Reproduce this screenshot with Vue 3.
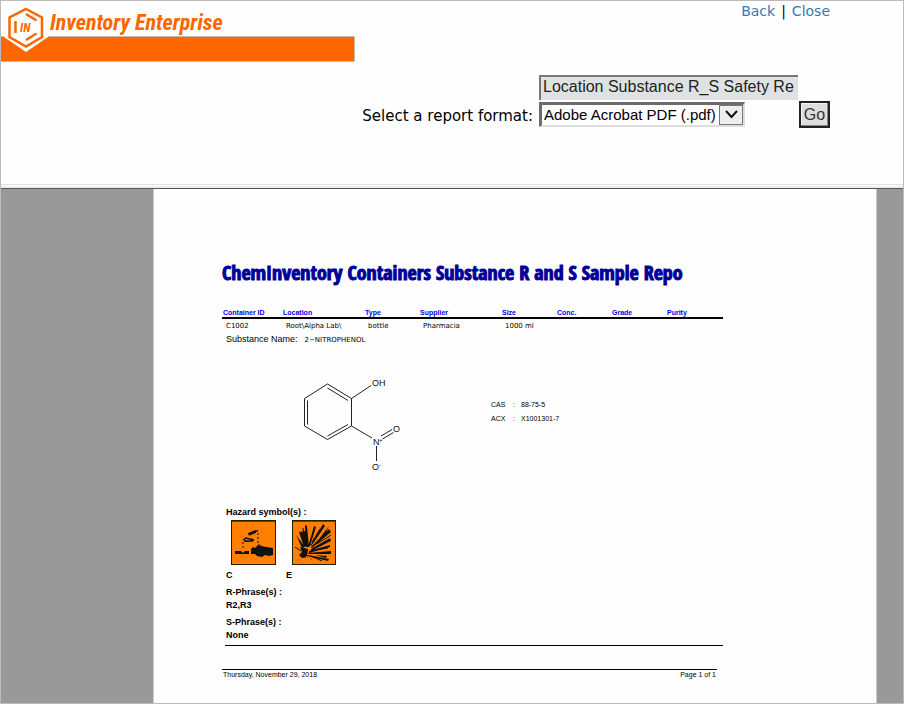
<script setup>
import { ref } from 'vue'

const title = ref('Location Substance R_S Safety Re')
const format = ref('pdf')

const columns = ['Container ID', 'Location', 'Type', 'Supplier', 'Size', 'Conc.', 'Grade', 'Purity']
const containers = [
  ['C1002', 'Root\\Alpha Lab\\', 'bottle', 'Pharmacia', '1000 ml', '', '', ''],
]
const phrases = [
  { label: 'R-Phrase(s) :', value: 'R2,R3' },
  { label: 'S-Phrase(s) :', value: 'None' },
]
</script>

<template>
  <div class="frame">
    <header class="top">
      <svg class="brand" width="360" height="64" viewBox="0 0 360 64" role="img" aria-label="Inventory Enterprise">
        <rect x="0" y="36" width="353" height="24" fill="#ff6600" />
        <path d="M46 35.500H353.500V60.500H0M0 35.500H6" fill="none" stroke="#c9b8ae" />
        <path d="M25 2L47 14V36L25 51L3 36V14Z" fill="#fefefe" />
        <path d="M25 8L41 16.500V36L25 45.500L8.500 36V16.500Z" fill="#fefefe" stroke="#ff6600" stroke-width="2.500" />
        <path d="M14.500 20V32M25 13L35.500 19.500M25 39L35.500 32.500" fill="none" stroke="#ff6600" stroke-width="2.500" />
        <text class="badge-text" x="19" y="31">IN</text>
        <text class="brand-text" x="49" y="29">Inventory Enterprise</text>
      </svg>

      <div class="controls">
        <nav class="links">
          <a href="#back">Back</a><span>|</span><a href="#close">Close</a>
        </nav>
        <form class="report-form" @submit.prevent>
          <input v-model="title" class="title-box" type="text" aria-label="Report title" readonly />
          <label class="format-label" for="format">Select a report format:</label>
          <div class="select-wrap">
            <select id="format" v-model="format">
              <option value="pdf">Adobe Acrobat PDF (.pdf)</option>
            </select>
            <svg class="arrow" width="24" height="20" viewBox="0 0 24 20" aria-hidden="true">
              <rect x="0.500" y="0.500" width="23" height="19" fill="#eeeeee" stroke="#777777" />
              <path d="M7 6L12.500 12L18 6" fill="none" stroke="#111111" stroke-width="2" />
            </svg>
          </div>
          <button class="go" type="submit">Go</button>
        </form>
      </div>
    </header>

    <main class="viewer">
      <article class="page">
        <h1>ChemInventory Containers Substance R and S Sample Repo</h1>

        <table>
          <colgroup>
            <col class="c-wide" /><col class="c-large" /><col class="c-mid" /><col class="c-large" />
            <col class="c-mid" /><col class="c-mid" /><col class="c-mid" /><col />
          </colgroup>
          <thead>
            <tr><th v-for="name in columns" :key="name" scope="col">{{ name }}</th></tr>
          </thead>
          <tbody>
            <tr v-for="row in containers" :key="row[0]">
              <td v-for="(cell, i) in row" :key="i">{{ cell }}</td>
            </tr>
          </tbody>
        </table>

        <section class="details">
          <p class="substance">Substance Name:<span>2−NITROPHENOL</span></p>

          <div class="chemistry">
            <svg class="molecule" width="120" height="110" viewBox="290 370 120 110" role="img" aria-label="Structure of 2-nitrophenol">
              <g fill="none" stroke="#222222" stroke-width="1">
                <path d="M327.500 384L351.500 398.500V426L327.500 439.500L304.500 426V398.500Z" />
                <path d="M327.500 388L348 400.500M348 424.500L327.500 436M307.500 424.500V400.500" />
                <path d="M351.500 398.500L371 385.500M351.500 426L372 438" />
                <path d="M381 436L392 429.500M382.500 439L393.500 432.500M376.500 446V461" />
              </g>
              <g class="atoms">
                <text x="372" y="386">OH</text>
                <text x="373" y="445">N</text>
                <text class="charge" x="379" y="442">+</text>
                <text x="393" y="432">O</text>
                <text x="372" y="470">O</text>
                <text class="charge" x="379" y="467">-</text>
              </g>
            </svg>
            <dl class="ids">
              <dt>CAS</dt><dd>:</dd><dd>88-75-5</dd>
              <dt>ACX</dt><dd>:</dd><dd>X1001301-7</dd>
            </dl>
          </div>

          <h2>Hazard symbol(s) :</h2>
          <div class="hazards">
            <figure>
              <svg width="46" height="46" viewBox="0 0 46 46" role="img" aria-label="Corrosive">
                <rect x="0.500" y="0.500" width="44" height="44" fill="#ff7f00" stroke="#222200" />
                <path d="M1 1.500H44" stroke="#7a3c00" stroke-width="1" />
                <path d="M4 31H10L12 33L14 31H18V34H4Z" fill="#111111" />
                <path d="M20 29L22 27L24 28L27 25L31 26L35 27L42 28V35L38 36L34 35L31 37L26 36L24 34L20 34Z" fill="#111111" />
                <path d="M17 14L24 11L27 11M18 15L25 12M12 20L15 18L23 20M13 21H22" fill="none" stroke="#111111" stroke-width="1.500" />
                <path d="M12 22V30M15 20V22M27 13V19M27 21V23M28 24V28" fill="none" stroke="#111111" stroke-dasharray="2 2" />
              </svg>
              <figcaption>C</figcaption>
            </figure>
            <figure>
              <svg width="46" height="46" viewBox="0 0 46 46" role="img" aria-label="Explosive">
                <rect x="1.500" y="0.500" width="43" height="44" fill="#ff7f00" stroke="#222200" />
                <path d="M2 1.500H44" stroke="#7a3c00" stroke-width="1" />
                <path d="M9 27L17 29L16 37L11 38L8 35L11 32Z" fill="#111111" />
                <path d="M12 30L5 15L13 26ZM13 27L8 12L15 11L16 26ZM15 27L14 5L16 6L18 27ZM17 27L23 6L25 7L19 26ZM19 26L32 4L34 6L21 25ZM20 27L38 9L40 12L21 28ZM20 29L39 18L40 21L20 31ZM18 31L39 25V27L18 33ZM17 33L40 31V34L18 34ZM17 35L38 39L37 41L16 36ZM24 35L36 36L35 38ZM25 23L38 6L35 12Z" fill="#111111" />
                <path d="M10 31L4 27M12 26L9 21M21 22L29 9M25 30L37 28M20 36L31 41M14 25L12 8M26 24L40 15" stroke="#111111" stroke-width="1" />
                <path d="M15 36L17 38M19 37L21 40M6 40H8" stroke="#c44f00" />
              </svg>
              <figcaption>E</figcaption>
            </figure>
          </div>

          <div v-for="item in phrases" :key="item.label" class="phrase">
            <h2>{{ item.label }}</h2>
            <p>{{ item.value }}</p>
          </div>
        </section>

        <footer>
          <span>Thursday, November 29, 2018</span>
          <span>Page 1 of 1</span>
        </footer>
      </article>
    </main>
  </div>
</template>

<style>
body {
  margin: 0;
  background: #fefefe;
}
</style>

<style scoped>
* {
  box-sizing: border-box;
}

.frame {
  display: flex;
  flex-direction: column;
  min-height: 100vh;
  border: 1px solid #bbbbbb;
  background: #fefefe;
  font-family: "Liberation Sans", Arial, sans-serif;
  color: #000000;
}

.top {
  display: flex;
  justify-content: space-between;
  min-height: 188px;
  border-bottom: 1px solid #555555;
  background: linear-gradient(#e2e2e2, #e2e2e2) 0 183px / 100% 1px no-repeat,
    linear-gradient(#eeeeee, #eeeeee) 0 185px / 100% 2px no-repeat;
}

.brand {
  flex: none;
}

.brand-text {
  font: italic bold 22px "Roboto Condensed", "Liberation Sans", sans-serif;
  fill: #ff6600;
}

.badge-text {
  font: italic bold 12px "Roboto Condensed", "Liberation Sans", sans-serif;
  fill: #ff6600;
}

.controls {
  display: flex;
  flex-direction: column;
  align-items: flex-end;
  margin-left: -40px;
  padding-right: 73px;
}

.links {
  display: flex;
  gap: 6px;
  height: 20px;
  margin-bottom: 54px;
  font: 14px/20px "DejaVu Sans", Verdana, sans-serif;
}

.links a {
  color: #337ab7;
  text-decoration: none;
}

.report-form {
  display: grid;
  grid-template-columns: auto 260px 31px;
  grid-template-rows: 25px 27px;
  row-gap: 1px;
}

.title-box {
  grid-column: 2;
  width: 259px;
  height: 25px;
  padding: 0 2px 3px;
  border: 0 solid #777777;
  border-width: 2px 0 0 2px;
  border-radius: 0;
  background: #dfe2e2;
  color: #222222;
  font: 16px "Liberation Sans", Arial, sans-serif;
  outline: none;
}

.format-label {
  grid-column: 1;
  padding-right: 6px;
  font: 15px/30px "DejaVu Sans", Verdana, sans-serif;
  white-space: nowrap;
}

.select-wrap {
  position: relative;
  justify-self: start;
  width: 206px;
  height: 25px;
  margin-top: 1px;
}

.select-wrap select {
  width: 100%;
  height: 100%;
  padding: 0 24px 2px 2px;
  border: 2px solid #dddddd;
  border-top: 3px solid #6c6c6c;
  border-left: 3px solid #6c6c6c;
  border-radius: 0;
  appearance: none;
  background: #fefefe;
  color: #000000;
  font: 15px "Liberation Sans", Arial, sans-serif;
}

.arrow {
  position: absolute;
  top: 3px;
  right: 2px;
  pointer-events: none;
}

.go {
  padding: 0;
  border: 2px solid #222222;
  border-radius: 0;
  background: #dddddd;
  box-shadow: inset -1px -1px #888888, inset 1px 1px #f4f4f4;
  color: #333333;
  font: 16px "Liberation Sans", Arial, sans-serif;
}

.viewer {
  flex: 1;
  display: flex;
  padding: 0 26px 0 152px;
  background: #999999;
}

.page {
  flex: 1;
  min-width: 0;
  padding: 70px 153px 20px 68px;
  border: 0 solid #cccccc;
  border-width: 0 1px;
  background: #fefefe;
}

h1 {
  height: 48px;
  margin: 0;
  color: #000099;
  font: bold 20px/28px "Open Sans Condensed", "Liberation Sans", sans-serif;
  -webkit-text-stroke: 1px #000099;
  white-space: nowrap;
}

table {
  width: 100%;
  table-layout: fixed;
  border-collapse: collapse;
}

.c-wide {
  width: 60px;
}

.c-large {
  width: 82px;
}

.c-mid {
  width: 55px;
}

th {
  height: 11px;
  padding: 0 1px;
  border-bottom: 2px solid #000000;
  color: #0000ee;
  font: bold 7px/9px "Liberation Sans", sans-serif;
  text-align: left;
  white-space: nowrap;
}

td {
  height: 14px;
  padding: 0 4px;
  font: 7px/14px "DejaVu Sans", Verdana, sans-serif;
  white-space: nowrap;
}

.details {
  margin-left: 3px;
  padding-bottom: 3px;
  border-bottom: 1px solid #000000;
  font-size: 9px;
  line-height: 13px;
}

.substance {
  margin: 0;
  padding-left: 1px;
}

.substance span {
  margin-left: 7px;
  font: 7px/13px "DejaVu Sans", Verdana, sans-serif;
}

.chemistry {
  display: flex;
  gap: 81px;
  padding: 23px 0 26px 65px;
}

.atoms text {
  font: 9px "Liberation Sans", sans-serif;
  fill: #111111;
}

.atoms .charge {
  font-size: 6px;
}

.ids {
  display: grid;
  grid-template-columns: 22px 8px auto;
  align-content: start;
  margin: 0;
  padding-top: 28px;
  font-size: 7px;
  line-height: 14px;
}

.ids dd {
  margin: 0;
}

h2 {
  margin: 0;
  padding-left: 1px;
  font-size: 9px;
  font-weight: bold;
  line-height: 13px;
}

.hazards {
  display: flex;
  padding: 1px 0 0 1px;
  font-weight: bold;
}

figure {
  width: 60px;
  margin: 0;
}

figure svg {
  display: block;
  margin-left: 5px;
}

figcaption {
  padding-top: 3px;
}

.phrase {
  padding-top: 4px;
  font-weight: bold;
}

.phrase p {
  margin: 0;
  padding-left: 1px;
}

footer {
  display: flex;
  justify-content: space-between;
  margin: 23px 6px 0 0;
  padding: 0 1px;
  border-top: 1px solid #000000;
  font-size: 7px;
  line-height: 10px;
}
</style>
